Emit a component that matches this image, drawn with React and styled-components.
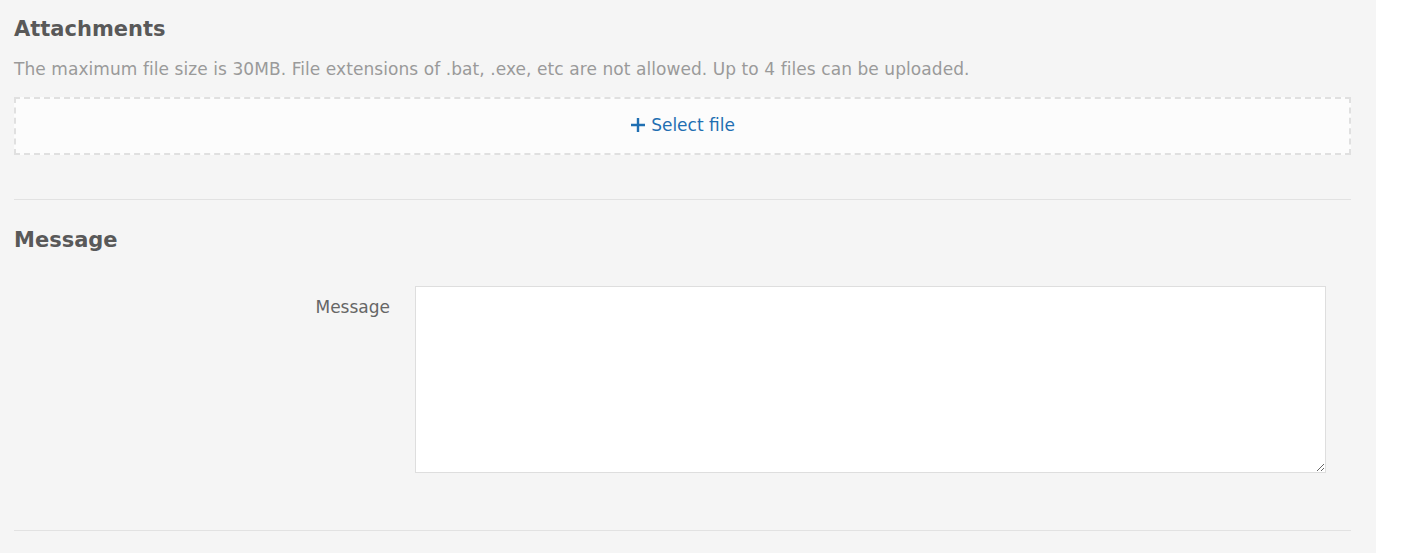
import React from "react";
import styled, { createGlobalStyle } from "styled-components";

const Global = createGlobalStyle`
  html, body { margin: 0; padding: 0; background: #ffffff; }
  body { font-family: "DejaVu Sans", "Noto Sans", sans-serif; }
`;

const Panel = styled.div`
  width: 1376px;
  height: 553px;
  box-sizing: border-box;
  background: #f5f5f5;
  padding: 0 25px 0 14px;
  overflow: hidden;
`;

const Section = styled.section`
  padding: ${(p) => p.$pad || "0"};
  border-bottom: 1px solid #e2e2e2;
`;

const Heading = styled.h2`
  margin: 0;
  font-size: 21px;
  line-height: 32px;
  font-weight: 700;
  color: #595959;
`;

const Note = styled.p`
  margin: 12px 0 0;
  font-size: 17px;
  line-height: 24px;
  letter-spacing: 0.07px;
  color: #9a9a9a;
`;

const DropZone = styled.button`
  display: flex;
  align-items: center;
  justify-content: center;
  gap: 5px;
  width: 100%;
  height: 58px;
  margin-top: 16px;
  padding: 0 0 3px;
  box-sizing: border-box;
  background: #fcfcfc;
  border: 2px dashed #e0e0e0;
  font-family: inherit;
  font-size: 17px;
  color: #1f6fb2;
  cursor: pointer;
`;

const Row = styled.div`
  display: flex;
  align-items: flex-start;
  margin-top: 30px;
`;

const Label = styled.label`
  width: 401px;
  text-align: right;
  padding-top: 10px;
  padding-right: 25px;
  box-sizing: border-box;
  font-size: 17px;
  line-height: 22px;
  color: #666;
`;

const TextArea = styled.textarea`
  width: 911px;
  height: 187px;
  box-sizing: border-box;
  border: 1px solid #dedede;
  background: #fff;
  resize: vertical;
  margin: 0;
  font-family: inherit;
`;

const PlusIcon = () => (
  <svg width="16" height="16" viewBox="0 0 16 16">
    <path d="M8 1v14M1 8h14" stroke="#1f6fb2" strokeWidth="2.4" />
  </svg>
);

export default function App() {
  return (
    <>
      <Global />
      <Panel>
        <Section $pad="13px 0 44px">
          <Heading>Attachments</Heading>
          <Note>The maximum file size is 30MB. File extensions of .bat, .exe, etc are not allowed. Up to 4 files can be uploaded.</Note>
          <DropZone type="button">
            <PlusIcon />
            <span>Select file</span>
          </DropZone>
        </Section>
        <Section $pad="24px 0 57px">
          <Heading>Message</Heading>
          <Row>
            <Label>Message</Label>
            <TextArea />
          </Row>
        </Section>
      </Panel>
    </>
  );
}
